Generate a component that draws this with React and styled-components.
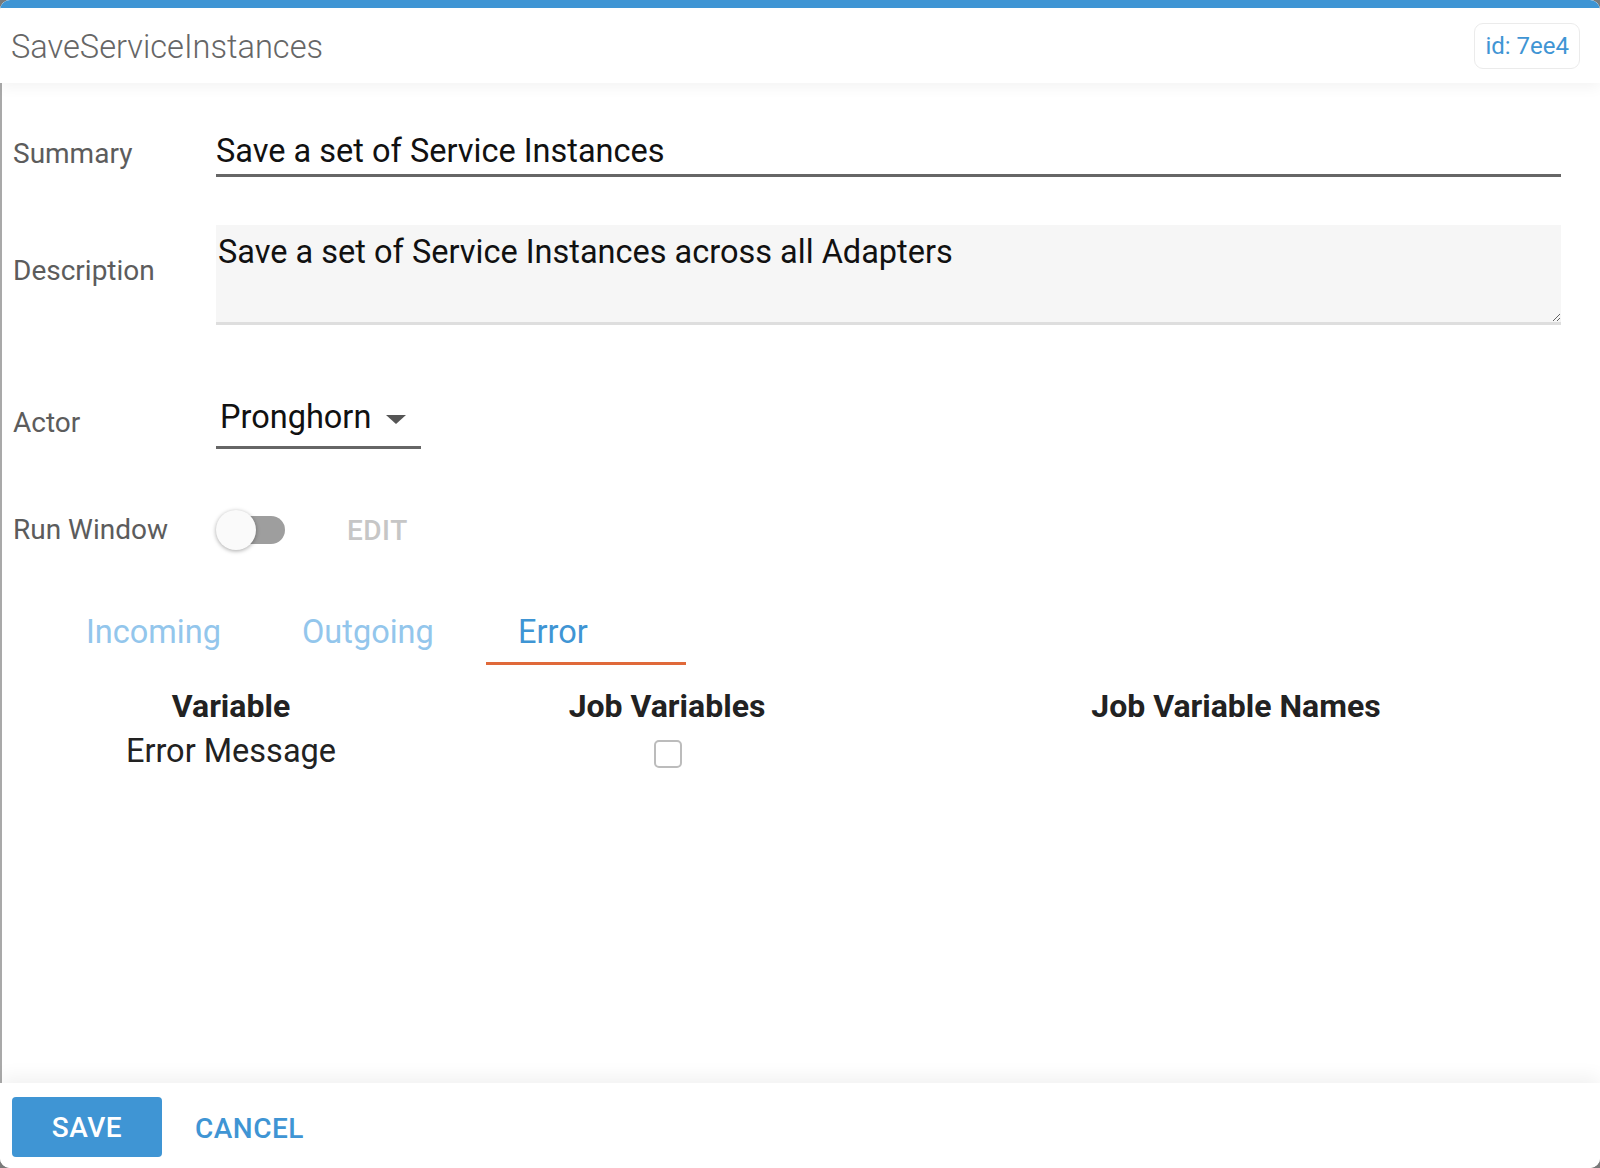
import React from 'react'
import styled, { createGlobalStyle } from 'styled-components';

const Global = createGlobalStyle`
    html, body {
        margin:0;
        padding:0;
        background:#7a7a7a;
    }
    * { box-sizing:border-box; }
`

const Modal = styled.div`
    width:1600px;
    height:1168px;
    background:white;
    border-radius:10px;
    overflow:hidden;
    display:flex;
    flex-direction:column;
    font-family:Roboto, "Liberation Sans", sans-serif;
`
const Header = styled.div`
    height:83px;
    flex:none;
    border-top:8px solid #3f95d4;
    display:flex;
    align-items:center;
    justify-content:space-between;
    padding:0 20px 0 11px;
    background:white;
    position:relative;
    z-index:2;
    box-shadow:0 4px 14px rgba(0,0,0,0.05);
`
const Title = styled.div`
    font-size:32.6px;
    font-weight:300;
    color:#666;
    padding-top:3px;
`
const IdBadge = styled.div`
    border:1.5px solid #ebebeb;
    border-radius:9px;
    padding:0 10px;
    height:46px;
    display:flex;
    align-items:center;
    font-size:24px;
    color:#3f95d4;
    margin-top:1px;
`
const Body = styled.div`
    flex:1;
    border-left:2px solid #a9a9a9;
    padding:39px 39px 0 11px;
    position:relative;
    z-index:1;
`
const Row = styled.div`
    display:flex;
    align-items:center;
    margin-top:${p => p.$top || 0}px;
    height:${p => p.$height}px;
`
const Label = styled.div`
    width:203px;
    flex:none;
    font-size:28px;
    color:#5c5c5c;
    margin-top:${p => p.$shift || 0}px;
`
const TextInput = styled.input`
    flex:1;
    height:55px;
    border:none;
    border-bottom:3px solid #666;
    outline:none;
    font-family:inherit;
    font-size:32.5px;
    color:#111;
    padding:6px 0 0 0;
    background:transparent;
`
const TextArea = styled.textarea`
    flex:1;
    height:100px;
    border:none;
    border-bottom:3px solid #dedede;
    background:#f6f6f6;
    outline:none;
    font-family:inherit;
    font-size:32.5px;
    line-height:38px;
    color:#111;
    padding:8px 2px;
`
const Select = styled.div`
    width:205px;
    height:56px;
    border-bottom:3px solid #666;
    display:flex;
    align-items:center;
    padding:0 0 6px 4px;
    font-size:32.5px;
    color:#111;
    gap:15px;
`
const Caret = styled.span`
    width:0;
    height:0;
    border-left:10px solid transparent;
    border-right:10px solid transparent;
    border-top:9px solid #555;
    margin-top:6px;
`
const Switch = styled.div`
    width:72px;
    height:40px;
    position:relative;
    flex:none;
`
const Track = styled.div`
    position:absolute;
    left:4px;
    right:3px;
    top:6px;
    height:28px;
    border-radius:14px;
    background:#9e9e9e;
`
const Knob = styled.div`
    position:absolute;
    left:0;
    top:0;
    width:40px;
    height:40px;
    border-radius:50%;
    background:#fafafa;
    box-shadow:0 1px 4px rgba(0,0,0,0.35);
`
const EditButton = styled.div`
    margin-left:59px;
    font-size:28px;
    font-weight:500;
    color:#c6c6c6;
    letter-spacing:0.5px;
`
const Tabs = styled.div`
    display:flex;
    margin:55px 0 0 41px;
`
const Tab = styled.div`
    width:200px;
    margin-right:16px;
    height:60px;
    padding:0 0 4px 32px;
    display:flex;
    align-items:center;
    font-size:32.5px;
    color:${p => p.$active ? '#3f95d4' : '#93c6ec'};
    border-bottom:3px solid ${p => p.$active ? '#e0693a' : 'transparent'};
`
const Grid = styled.div`
    display:grid;
    grid-template-columns:354px 518px 620px;
    margin:20px 0 0 41px;
    color:#222;
`
const HeadCell = styled.div`
    height:42px;
    display:flex;
    align-items:center;
    justify-content:center;
    font-size:32px;
    font-weight:700;
`
const Cell = styled.div`
    height:48px;
    display:flex;
    align-items:center;
    justify-content:center;
    font-size:32.5px;
`
const Check = styled.div`
    width:28px;
    height:28px;
    border:2px solid #bcbcbc;
    border-radius:5px;
    margin:6px 0 0 2px;
`
const Footer = styled.div`
    height:85px;
    flex:none;
    background:white;
    display:flex;
    align-items:center;
    padding:0 12px;
    position:relative;
    z-index:2;
    box-shadow:0 -6px 18px rgba(0,0,0,0.06);
`
const SaveBtn = styled.button`
    width:150px;
    height:60px;
    border:none;
    border-radius:4px;
    background:#3f95d4;
    color:white;
    font-family:inherit;
    font-size:28px;
    font-weight:500;
    letter-spacing:0.5px;
    margin-top:3px;
`
const CancelBtn = styled.button`
    border:none;
    background:none;
    color:#3f95d4;
    font-family:inherit;
    font-size:28px;
    font-weight:500;
    letter-spacing:0.5px;
    margin:6px 0 0 33px;
    padding:0;
`

function App() {
    return (
        <Modal>
            <Global />
            <Header>
                <Title>SaveServiceInstances</Title>
                <IdBadge>id: 7ee4</IdBadge>
            </Header>
            <Body>
                <Row $height={55}>
                    <Label $shift={8}>Summary</Label>
                    <TextInput defaultValue="Save a set of Service Instances" />
                </Row>
                <Row $top={48} $height={100}>
                    <Label $shift={-10}>Description</Label>
                    <TextArea defaultValue="Save a set of Service Instances across all Adapters" />
                </Row>
                <Row $top={68} $height={56}>
                    <Label $shift={2}>Actor</Label>
                    <Select>
                        <span>Pronghorn</span>
                        <Caret />
                    </Select>
                </Row>
                <Row $top={61} $height={40}>
                    <Label $shift={-2}>Run Window</Label>
                    <Switch>
                        <Track />
                        <Knob />
                    </Switch>
                    <EditButton>EDIT</EditButton>
                </Row>
                <Tabs>
                    <Tab>Incoming</Tab>
                    <Tab>Outgoing</Tab>
                    <Tab $active>Error</Tab>
                </Tabs>
                <Grid>
                    <HeadCell>Variable</HeadCell>
                    <HeadCell>Job Variables</HeadCell>
                    <HeadCell>Job Variable Names</HeadCell>
                    <Cell>Error Message</Cell>
                    <Cell><Check /></Cell>
                    <Cell />
                </Grid>
            </Body>
            <Footer>
                <SaveBtn>SAVE</SaveBtn>
                <CancelBtn>CANCEL</CancelBtn>
            </Footer>
        </Modal>
    )
}

export default App
